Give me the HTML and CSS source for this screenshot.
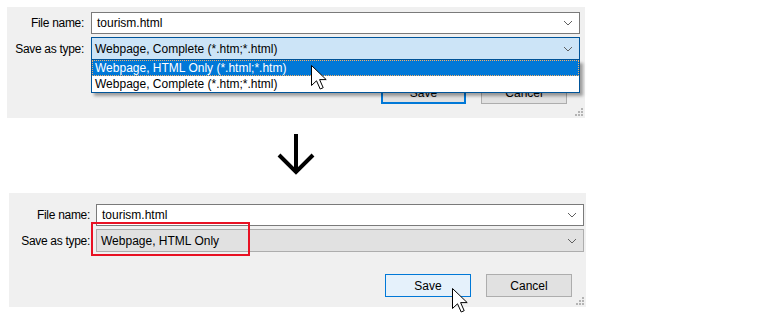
FILE: index.html
```html
<!DOCTYPE html>
<html>
<head>
<meta charset="utf-8">
<link rel="stylesheet" href="styles.css">
</head>
<body>
<div class="page">
  <div class="dialog dialog-top">
    <div class="form">
      <label class="lbl">File name:</label>
      <div class="field"><span>tourism.html</span><svg class="chev" width="10" height="6" viewBox="0 0 10 6"><path d="M1 1 L5 5 L9 1" fill="none" stroke="#606060" stroke-width="1"/></svg></div>
      <label class="lbl">Save as type:</label>
      <div class="combo combo-focus"><span>Webpage, Complete (*.htm;*.html)</span><svg class="chev" width="10" height="6" viewBox="0 0 10 6"><path d="M1 1 L5 5 L9 1" fill="none" stroke="#606060" stroke-width="1"/></svg></div>
    </div>
    <div class="buttons buttons-top">
      <div class="btn btn-default">Save</div>
      <div class="btn">Cancel</div>
    </div>
    <ul class="droplist">
      <li class="item item-sel">Webpage, HTML Only (*.html;*.htm)</li>
      <li class="item">Webpage, Complete (*.htm;*.html)</li>
    </ul>
    <svg class="cursor cursor-top" width="17" height="25" viewBox="0 0 17 25"><path d="M0.5 0.5 V20.5 L5.5 15.8 L9.2 24 L12.2 22.7 L8.6 14.6 H15.2 Z" fill="#fff" stroke="#000" stroke-width="1" stroke-linejoin="miter"/></svg>
    <svg class="grip" width="8" height="8" viewBox="0 0 8 8"><g fill="#b4b4b4"><rect x="6" y="0" width="2" height="2"/><rect x="3" y="3" width="2" height="2"/><rect x="6" y="3" width="2" height="2"/><rect x="0" y="6" width="2" height="2"/><rect x="3" y="6" width="2" height="2"/><rect x="6" y="6" width="2" height="2"/></g></svg>
  </div>

  <div class="arrow-row">
    <svg width="40" height="44" viewBox="0 0 40 44"><g fill="none" stroke="#000" stroke-width="4"><path d="M20 0 V39"/><path d="M3 21 L20 38 L37 21"/></g></svg>
  </div>

  <div class="dialog dialog-bottom">
    <div class="form">
      <label class="lbl">File name:</label>
      <div class="field"><span>tourism.html</span><svg class="chev" width="10" height="6" viewBox="0 0 10 6"><path d="M1 1 L5 5 L9 1" fill="none" stroke="#606060" stroke-width="1"/></svg></div>
      <label class="lbl">Save as type:</label>
      <div class="combo"><span>Webpage, HTML Only</span><svg class="chev" width="10" height="6" viewBox="0 0 10 6"><path d="M1 1 L5 5 L9 1" fill="none" stroke="#606060" stroke-width="1"/></svg></div>
    </div>
    <div class="buttons buttons-bottom">
      <div class="btn btn-hover">Save</div>
      <div class="btn">Cancel</div>
    </div>
    <div class="highlight"></div>
    <svg class="cursor cursor-bottom" width="17" height="25" viewBox="0 0 17 25"><path d="M0.5 0.5 V20.5 L5.5 15.8 L9.2 24 L12.2 22.7 L8.6 14.6 H15.2 Z" fill="#fff" stroke="#000" stroke-width="1" stroke-linejoin="miter"/></svg>
    <svg class="grip" width="8" height="8" viewBox="0 0 8 8"><g fill="#b4b4b4"><rect x="6" y="0" width="2" height="2"/><rect x="3" y="3" width="2" height="2"/><rect x="6" y="3" width="2" height="2"/><rect x="0" y="6" width="2" height="2"/><rect x="3" y="6" width="2" height="2"/><rect x="6" y="6" width="2" height="2"/></g></svg>
  </div>
</div>
</body>
</html>
```

FILE: styles.css
```css
* { box-sizing: border-box; }
html, body {
  margin: 0;
  padding: 0;
  background: #fff;
}
body {
  width: 760px;
  height: 315px;
  overflow: hidden;
  font-family: "Liberation Sans", Arial, sans-serif;
  font-size: 12px;
  color: #000;
}
.page {
  display: flex;
  flex-direction: column;
}
.dialog {
  position: relative;
  background: #f0f0f0;
  display: flex;
  flex-direction: column;
}
.dialog-top {
  margin: 7px 0 0 7px;
  width: 578px;
  height: 111px;
  padding: 5px 5px 0 0;
}
.dialog-bottom {
  margin: 0 0 0 9px;
  width: 577px;
  height: 114px;
  padding: 11px 2px 0 0;
}
.form {
  display: grid;
  grid-template-columns: 77px 1fr;
  column-gap: 7px;
  row-gap: 3px;
  align-items: center;
}
.dialog-bottom .form {
  grid-template-columns: 81px 1fr;
  column-gap: 6px;
}
.lbl {
  text-align: right;
  white-space: nowrap;
  letter-spacing: -0.3px;
  color: #000;
}
.field, .combo {
  height: 22px;
  border: 1px solid #7a7a7a;
  background: #fff;
  display: flex;
  align-items: center;
  justify-content: space-between;
  padding: 0 6px 0 5px;
  white-space: nowrap;
}
.combo {
  height: 23px;
  background: #e1e1e1;
  border-color: #adadad;
  padding-left: 4px;
}
.dialog-bottom .field { padding-left: 5px; }
.combo-focus {
  background: #cce4f7;
  border-color: #005499;
  padding-left: 3px;
}
.chev { flex: none; }
.buttons {
  display: flex;
  justify-content: flex-end;
  gap: 15px;
}
.buttons-top {
  margin-top: 21px;
  padding-right: 13px;
}
.buttons-bottom {
  margin-top: 22px;
  padding-right: 12px;
}
.btn {
  width: 86px;
  height: 23px;
  border: 1px solid #adadad;
  background: #e1e1e1;
  display: flex;
  align-items: center;
  justify-content: center;
}
.btn-default {
  width: 85px;
  border: 2px solid #0078d7;
}
.btn-hover {
  width: 86px;
  border: 1px solid #0078d7;
  background: #e5f1fb;
}
.droplist {
  position: absolute;
  left: 84px;
  top: 53px;
  width: 489px;
  margin: 0;
  padding: 0;
  list-style: none;
  background: #fff;
  border: 1px solid #005499;
  border-top: none;
  box-shadow: 3px 3px 3px rgba(0, 0, 0, 0.35);
}
.item {
  height: 16px;
  line-height: 14px;
  padding-left: 2px;
  white-space: nowrap;
  border: 1px solid transparent;
}
.item-sel {
  background: #0078d7;
  color: #fff;
  border: 1px dotted #f2b06a;
}
.cursor {
  position: absolute;
}
.cursor-top {
  left: 304px;
  top: 58px;
}
.cursor-bottom {
  left: 443px;
  top: 95px;
}
.grip {
  position: absolute;
  right: 2px;
  bottom: 2px;
}
.highlight {
  position: absolute;
  left: 82px;
  top: 29px;
  width: 159px;
  height: 34px;
  border: 2px solid #e81123;
}
.arrow-row {
  height: 75px;
  display: flex;
  justify-content: flex-start;
  padding: 16px 0 0 276px;
}
```
